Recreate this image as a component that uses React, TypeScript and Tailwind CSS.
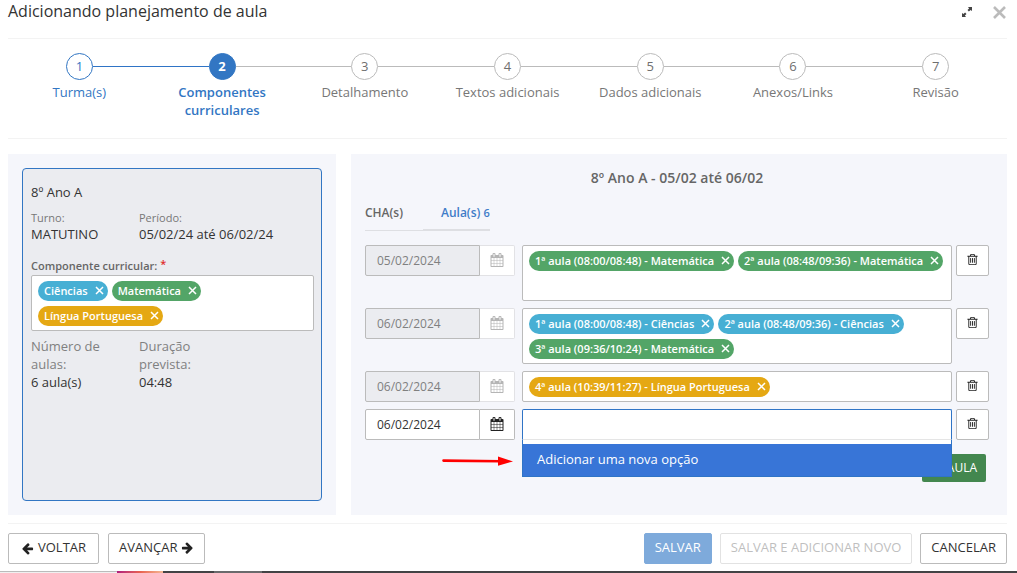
import { useState } from 'react';
import { Plus } from 'lucide-react';

type ChipColor = 'blue' | 'green' | 'yellow';

interface ChipData {
  label: string;
  color: ChipColor;
}

interface LessonRow {
  id: number;
  date: string;
  locked: boolean;
  tall?: boolean;
  chips: ChipData[];
}

const steps = [
  'Turma(s)',
  'Componentes curriculares',
  'Detalhamento',
  'Textos adicionais',
  'Dados adicionais',
  'Anexos/Links',
  'Revisão',
];

const currentStep = 2;

const subjects: ChipData[] = [
  { label: 'Ciências', color: 'blue' },
  { label: 'Matemática', color: 'green' },
  { label: 'Língua Portuguesa', color: 'yellow' },
];

const initialRows: LessonRow[] = [
  {
    id: 1,
    date: '05/02/2024',
    locked: true,
    tall: true,
    chips: [
      { label: '1ª aula (08:00/08:48) - Matemática', color: 'green' },
      { label: '2ª aula (08:48/09:36) - Matemática', color: 'green' },
    ],
  },
  {
    id: 2,
    date: '06/02/2024',
    locked: true,
    tall: true,
    chips: [
      { label: '1ª aula (08:00/08:48) - Ciências', color: 'blue' },
      { label: '2ª aula (08:48/09:36) - Ciências', color: 'blue' },
      { label: '3ª aula (09:36/10:24) - Matemática', color: 'green' },
    ],
  },
  {
    id: 3,
    date: '06/02/2024',
    locked: true,
    chips: [{ label: '4ª aula (10:39/11:27) - Língua Portuguesa', color: 'yellow' }],
  },
  { id: 4, date: '06/02/2024', locked: false, chips: [] },
];

const chipColors: Record<ChipColor, string> = {
  blue: 'bg-[#47afd4]',
  green: 'bg-[#53a567]',
  yellow: 'bg-[#e5a813]',
};

function CalendarIcon() {
  return (
    <svg viewBox="0 0 1792 1792" className="h-[14px] w-[14px]" fill="currentColor" aria-hidden="true">
      <path d="M192 1664h288v-288h-288v288zM544 1664h320v-288h-320v288zM192 1312h288v-320h-288v320zM544 1312h320v-320h-320v320zM192 928h288v-288h-288v288zM928 1664h320v-288h-320v288zM544 928h320v-288h-320v288zM1312 1664h288v-288h-288v288zM928 1312h320v-320h-320v320zM576 448v-288q0-13-9.5-22.5t-22.5-9.5h-64q-13 0-22.5 9.5t-9.5 22.5v288q0 13 9.5 22.5t22.5 9.5h64q13 0 22.5-9.5t9.5-22.5zM1312 1312h288v-320h-288v320zM928 928h320v-288h-320v288zM1312 928h288v-288h-288v288zM1344 448v-288q0-13-9.5-22.5t-22.5-9.5h-64q-13 0-22.5 9.5t-9.5 22.5v288q0 13 9.5 22.5t22.5 9.5h64q13 0 22.5-9.5t9.5-22.5zM1728 384v1280q0 52-38 90t-90 38h-1408q-52 0-90-38t-38-90v-1280q0-52 38-90t90-38h128v-96q0-66 47-113t113-47h64q66 0 113 47t47 113v96h384v-96q0-66 47-113t113-47h64q66 0 113 47t47 113v96h128q52 0 90 38t38 90z" />
    </svg>
  );
}

function TrashIcon() {
  return (
    <svg viewBox="0 0 1792 1792" className="h-[13px] w-[13px]" fill="currentColor" aria-hidden="true">
      <path d="M704 736v576q0 14-9 23t-23 9h-64q-14 0-23-9t-9-23v-576q0-14 9-23t23-9h64q14 0 23 9t9 23zm256 0v576q0 14-9 23t-23 9h-64q-14 0-23-9t-9-23v-576q0-14 9-23t23-9h64q14 0 23 9t9 23zm256 0v576q0 14-9 23t-23 9h-64q-14 0-23-9t-9-23v-576q0-14 9-23t23-9h64q14 0 23 9t9 23zm128 724v-948h-896v948q0 22 7 40.5t14.5 27 10.5 8.5h832q3 0 10.5-8.5t14.5-27 7-40.5zm-672-1076h448l-48-117q-7-9-17-11h-317q-10 2-17 11zm928 32v64q0 14-9 23t-23 9h-96v948q0 83-47 143.5t-113 60.5h-832q-66 0-113-58.5t-47-141.5v-952h-96q-14 0-23-9t-9-23v-64q0-14 9-23t23-9h309l70-167q15-37 54-63t79-26h320q40 0 79 26t54 63l70 167h309q14 0 23 9t9 23z" />
    </svg>
  );
}

function ArrowIcon({ className = '' }: { className?: string }) {
  return (
    <svg viewBox="0 0 1792 1792" className={`h-[13px] w-[13px] ${className}`} fill="currentColor" aria-hidden="true">
      <path d="M1664 896v128q0 53-32.5 90.5t-84.5 37.5h-704l293 294q38 36 38 90t-38 90l-75 76q-37 37-90 37-52 0-91-37l-651-652q-37-37-37-90 0-52 37-91l651-650q38-38 91-38 52 0 90 38l75 74q38 38 38 91t-38 91l-293 293h704q52 0 84.5 37.5t32.5 90.5z" />
    </svg>
  );
}

function Chip({ chip }: { chip: ChipData }) {
  return (
    <span
      className={`flex h-5 items-center gap-[7px] rounded-full pr-1 pl-[6px] text-[11px] leading-5 font-semibold text-white ${chipColors[chip.color]}`}
    >
      {chip.label}
      <button type="button" aria-label={`Remover ${chip.label}`} className="pb-[2px]">
        <svg viewBox="0 0 9 9" className="h-[9px] w-[9px]" stroke="currentColor" strokeWidth="1.5" fill="none">
          <path d="M1 1l7 7M8 1l-7 7" />
        </svg>
      </button>
    </span>
  );
}

function ChipBox({ chips, tall }: { chips: ChipData[]; tall?: boolean }) {
  return (
    <div
      className={`flex flex-wrap content-start gap-x-1 gap-y-[5px] rounded-xs border border-[#bbb] bg-white px-[6px] pt-[5px] pb-1 ${
        tall ? 'min-h-14' : ''
      }`}
    >
      {chips.map((chip) => (
        <Chip key={chip.label} chip={chip} />
      ))}
    </div>
  );
}

function Stepper() {
  return (
    <ol className="flex h-[101px] border-y border-[#f3f3f3] pt-[14px] text-[13px] leading-[18px]">
      {steps.map((label, i) => {
        const n = i + 1;
        const done = n < currentStep;
        const active = n === currentStep;
        return (
          <li key={label} className="flex flex-1 flex-col items-center">
            <div className="flex w-full items-center">
              <span
                className={`h-px flex-1 ${n === 1 ? 'bg-transparent' : n <= currentStep ? 'bg-[#2f74c6]' : 'bg-[#bbb]'}`}
              />
              <span
                className={`flex h-[27px] w-[27px] items-center justify-center rounded-full border pb-[2px] ${
                  active
                    ? 'border-[#3276c3] bg-[#3276c3] font-bold text-white'
                    : done
                      ? 'border-[#3276c3] text-[#3276c3]'
                      : 'border-[#bbb] text-[#6f6f6f]'
                }`}
              >
                {n}
              </span>
              <span
                className={`h-px flex-1 ${
                  n === steps.length ? 'bg-transparent' : done ? 'bg-[#2f74c6]' : 'bg-[#bbb]'
                }`}
              />
            </div>
            <span
              className={`mt-[3px] max-w-[120px] text-center ${
                active ? 'font-semibold text-[#3276c3]' : done ? 'text-[#3276c3]' : 'text-[#777]'
              }`}
            >
              {label}
            </span>
          </li>
        );
      })}
    </ol>
  );
}

function ClassCard() {
  return (
    <section className="bg-[#f5f6fb] p-[14px]">
      <div className="h-full rounded-sm border border-[#3276c3] bg-[#ebecf0] pt-[14px] pr-[7px] pl-2 text-[13px] leading-[18px] text-[#333]">
        <h3>8º Ano A</h3>
        <dl className="mt-[9px] grid grid-cols-[108px_1fr]">
          <div>
            <dt className="text-[11px] leading-[15px] text-[#777]">Turno:</dt>
            <dd>MATUTINO</dd>
          </div>
          <div>
            <dt className="text-[11px] leading-[15px] text-[#777]">Período:</dt>
            <dd>05/02/24 até 06/02/24</dd>
          </div>
        </dl>
        <p className="mt-[15px] mb-px text-[11px] leading-4 font-semibold text-[#666]">
          Componente curricular: <span className="align-top leading-3 text-[#e02b2b]">*</span>
        </p>
        <ChipBox chips={subjects} tall />
        <dl className="mt-[6px] grid grid-cols-[108px_1fr]">
          <div>
            <dt className="max-w-20 text-[#808080]">Número de aulas:</dt>
            <dd>6 aula(s)</dd>
          </div>
          <div>
            <dt className="max-w-20 text-[#808080]">Duração prevista:</dt>
            <dd>04:48</dd>
          </div>
        </dl>
      </div>
    </section>
  );
}

function DateField({ date, locked }: { date: string; locked: boolean }) {
  return (
    <div className="flex h-[31px] w-[150px] shrink-0">
      <input
        type="text"
        aria-label="Data"
        defaultValue={date}
        disabled={locked}
        className="w-[115px] rounded-l-xs border border-[#bbb] bg-white px-[11px] text-[12px] text-[#333] disabled:bg-[#ebecf0] disabled:text-[#808080]"
      />
      <button
        type="button"
        aria-label="Abrir calendário"
        disabled={locked}
        className="flex flex-1 items-center justify-center rounded-r-xs border border-l-0 border-[#bbb] bg-white pb-px text-[#222] disabled:border-[#e2e2e5] disabled:text-[#b5b5b5]"
      >
        <CalendarIcon />
      </button>
    </div>
  );
}

function LessonPicker() {
  return (
    <div className="relative">
      <input
        type="text"
        aria-label="Aulas"
        className="block h-[31px] w-full rounded-t-xs border border-b-[#e5e5e5] border-[#2f74c6] bg-white px-2 text-[13px] outline-none"
      />
      <div className="absolute inset-x-0 top-full z-10 border border-t-0 border-[#2f74c6] bg-white pt-1">
        <button
          type="button"
          className="block h-8 w-full bg-[#3875d7] px-[14px] text-left text-[13px] text-white"
        >
          Adicionar uma nova opção
        </button>
      </div>
      {/* Red arrow pointing at the new option */}
      <svg viewBox="0 0 72 12" className="absolute top-[46px] right-full mr-2 h-3 w-[72px]" aria-hidden="true">
        <path d="M1.5 5.6L58 6.2" stroke="#ff0000" strokeWidth="2.6" strokeLinecap="round" />
        <path d="M56 1.5L71 6.4L56 10.8z" fill="#ff0000" />
      </svg>
    </div>
  );
}

function LessonsPanel() {
  const [tab, setTab] = useState('aulas');
  const [rows, setRows] = useState(initialRows);

  return (
    <section className="bg-[#f5f6fb] pt-[14px] pr-[18px] pb-[33px] pl-[14px]">
      <h2 className="text-center text-[14px] leading-5 font-semibold text-[#666]">8º Ano A - 05/02 até 06/02</h2>

      <div className="mt-[15px] flex text-[12px] leading-[18px] font-semibold" role="tablist">
        <button
          type="button"
          role="tab"
          aria-selected={tab === 'cha'}
          onClick={() => setTab('cha')}
          className="h-[28px] w-[58px] border-b border-[#dedfe3] pb-[8px] text-left text-[#666]"
        >
          CHA(s)
        </button>
        <button
          type="button"
          role="tab"
          aria-selected={tab === 'aulas'}
          onClick={() => setTab('aulas')}
          className="h-[28px] border-b-2 border-[#dedfe3] pb-[7px] pl-[18px] text-[#3f7cc8]"
        >
          Aula(s) <span className="text-[11px]">6</span>
        </button>
      </div>

      <div className="mt-[14px] flex flex-col gap-[7px]">
        {rows.map((row) => (
          <div key={row.id} className="flex items-start">
            <DateField date={row.date} locked={row.locked} />
            <div className="mr-1 ml-[7px] min-w-0 flex-1">
              {row.locked ? <ChipBox chips={row.chips} tall={row.tall} /> : <LessonPicker />}
            </div>
            <button
              type="button"
              aria-label="Excluir"
              onClick={() => setRows(rows.filter((r) => r.id !== row.id))}
              className="flex h-[31px] w-[33px] items-center justify-center rounded-xs border border-[#bbb] bg-white pb-[2px] text-[#222]"
            >
              <TrashIcon />
            </button>
          </div>
        ))}
      </div>

      <div className="mt-[14px] mr-[3px] flex justify-end">
        <button
          type="button"
          className="flex h-7 items-center gap-1 rounded-xs bg-[#43874f] px-[9px] text-[12px] text-white"
        >
          <Plus className="h-3 w-3" />
          AULA
        </button>
      </div>
    </section>
  );
}

export default function App() {
  const footerButton = 'flex h-[31px] items-center rounded-xs border pb-px text-[13px]';

  return (
    <div className="bg-white font-['Open_Sans',sans-serif] text-[#333]">
      <div className="pr-[10px] pl-2">
        <header className="flex h-[38px] items-start justify-between">
          <h1 className="text-[16px] leading-[22px]">Adicionando planejamento de aula</h1>
          <div className="flex items-center gap-[21px] pt-[6px] pr-px">
            <button type="button" aria-label="Expandir" className="pb-[2px] text-[#444]">
              <svg viewBox="0 0 10 10" className="h-[10px] w-[10px]" fill="currentColor">
                <path d="M6 0H10v4L8.6 2.9 6.9 4.5 5.5 3.1 7.1 1.4zM4 10H0V6L1.4 7.1 3.1 5.5 4.5 6.9 2.9 8.6z" />
              </svg>
            </button>
            <button type="button" aria-label="Fechar" className="text-[#bbb]">
              <svg viewBox="0 0 13 13" className="h-[13px] w-[13px]" stroke="currentColor" strokeWidth="2.6" fill="none">
                <path d="M1 1l11 11M12 1L1 12" />
              </svg>
            </button>
          </div>
        </header>

        <Stepper />

        <main className="mt-[15px] grid grid-cols-[1fr_2fr] gap-[15px]">
          <ClassCard />
          <LessonsPanel />
        </main>

        <footer className="mt-2 mb-[7px] flex items-center justify-between border-t border-[#f3f3f3] pt-[9px]">
          <div className="flex gap-[9px]">
            <button type="button" className={`${footerButton} gap-1 border-[#bbb] px-3`}>
              <ArrowIcon className="text-[#222]" />
              VOLTAR
            </button>
            <button type="button" className={`${footerButton} gap-1 border-[#bbb] px-[10px]`}>
              AVANÇAR
              <ArrowIcon className="rotate-180 text-[#222]" />
            </button>
          </div>
          <div className="flex gap-2">
            <button type="button" className={`${footerButton} border-[#7eaadb] bg-[#7eaadb] px-[10px] text-white`}>
              SALVAR
            </button>
            <button type="button" disabled className={`${footerButton} border-[#e2e2e2] px-[10px] text-[#bfbfbf]`}>
              SALVAR E ADICIONAR NOVO
            </button>
            <button type="button" className={`${footerButton} border-[#bbb] px-[10px]`}>
              CANCELAR
            </button>
          </div>
        </footer>
      </div>

      <div className="flex h-[2px]">
        <span className="w-[117px] border-t border-[#bbb] bg-[#f0f0f0]" />
        <span className="w-[46px] bg-linear-to-r from-[#b01a7c] via-[#e8604f] to-[#f3b793]" />
        <span className="w-[51px] bg-[#434345]" />
        <span className="w-12 bg-[#6a6a6c]" />
        <span className="flex-1 bg-[#434345]" />
      </div>
    </div>
  );
}
